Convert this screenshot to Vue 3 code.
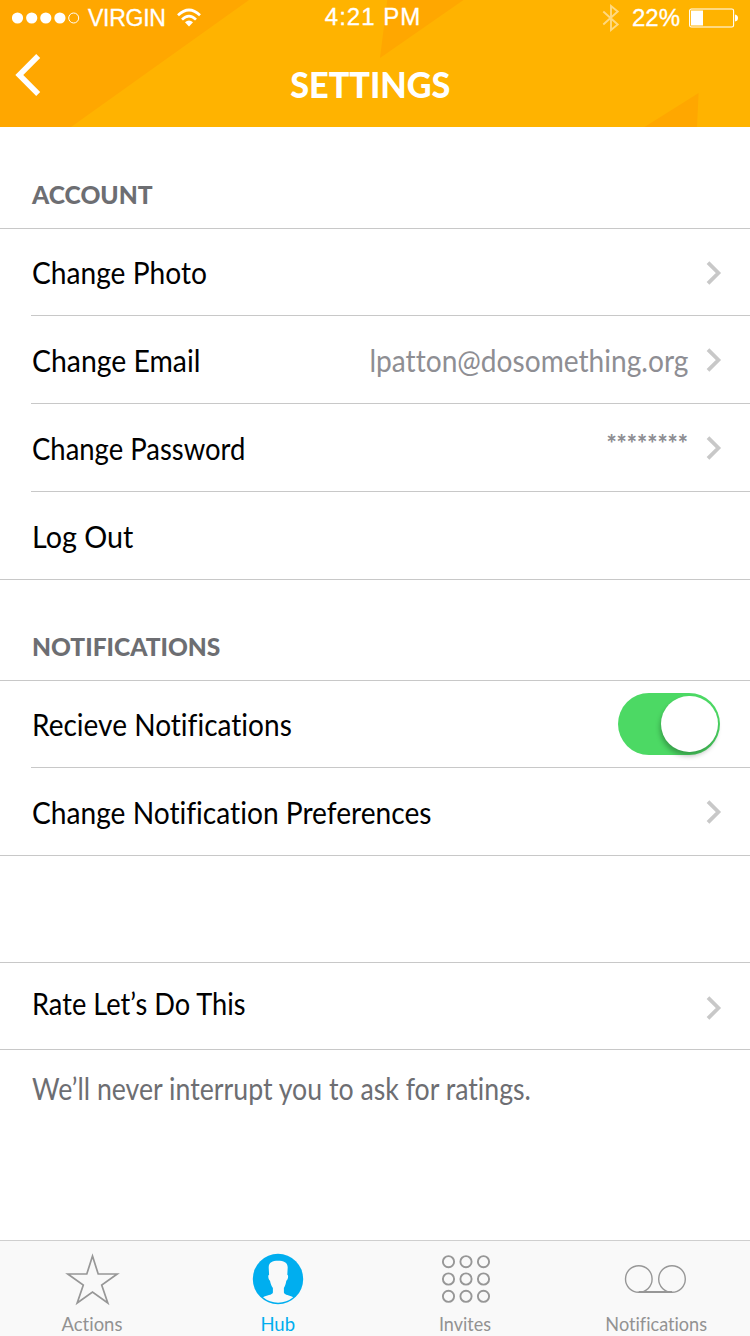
<script setup>
const groups = [
  {
    id: 'account',
    title: 'ACCOUNT',
    fit: 0.985,
    rows: [
      { label: 'Change Photo', fit: 0.938, chevron: true },
      { label: 'Change Email', fit: 0.946, chevron: true, value: 'lpatton@dosomething.org', valueFit: 0.937 },
      { label: 'Change Password', fit: 0.915, chevron: true, value: '********', valueFit: 1, masked: true },
      { label: 'Log Out', fit: 0.957 },
    ],
  },
  {
    id: 'notifications',
    title: 'NOTIFICATIONS',
    fit: 0.982,
    rows: [
      { label: 'Recieve Notifications', fit: 0.935, toggle: true },
      { label: 'Change Notification Preferences', fit: 0.938, chevron: true },
    ],
  },
  {
    id: 'rate',
    rows: [{ label: 'Rate Let’s Do This', fit: 0.907, chevron: true }],
  },
]

const tabs = [
  { id: 'actions', label: 'Actions', fit: 0.922 },
  { id: 'hub', label: 'Hub', fit: 0.925, active: true },
  { id: 'invites', label: 'Invites', fit: 0.9 },
  { id: 'notifications', label: 'Notifications', fit: 0.905 },
]

const dots = [448.5, 466, 483.5].flatMap((x) => [1261.7, 1279, 1296.3].map((y) => ({ x: x - 440, y: y - 1252 })))
const squeeze = (k) => ({ transform: `scaleX(${k})` })
</script>

<template>
  <div class="screen">
    <header class="header">
      <svg class="pattern" width="750" height="127" viewBox="0 0 750 127">
        <path d="M0 0H249L71 127H0ZM387.3 0H463.5L380 58ZM644.500 127L698.600 93L697 127Z" fill="#ffa700" />
      </svg>
      <div class="status">
        <div class="carrier">
          <svg width="70" height="14" viewBox="0 0 70 14">
            <g fill="#fff">
              <circle cx="5.500" cy="7" r="5.600" /><circle cx="19.700" cy="7" r="5.600" />
              <circle cx="33.800" cy="7" r="5.600" /><circle cx="47.900" cy="7" r="5.600" />
            </g>
            <circle cx="61.700" cy="7" r="5" fill="none" stroke="#fff" />
          </svg>
          <span class="network">VIRGIN</span>
          <svg class="wifi" width="24" height="20" viewBox="0 0 24 20">
            <path d="M1 7.300Q12 -3.300 23 7.300M5 11.600Q12 4.600 19 11.600" fill="none" stroke="#fff" stroke-width="2.700" />
            <path d="M8 14.300Q12 10.500 16 14.300L12 18.600Z" fill="#fff" />
          </svg>
        </div>
        <span class="time">4:21 PM</span>
        <div class="power">
          <svg class="bluetooth" width="18" height="28" viewBox="0 0 18 28">
            <path d="M1.300 7.500L15.700 20.500L9 26V2L15.700 7.500L1.300 20.500" fill="none" stroke="#fff" stroke-width="1.900" />
          </svg>
          <span class="percent">22%</span>
          <svg width="50" height="20" viewBox="0 0 50 20">
            <rect x="0.600" y="1" width="44" height="18" rx="1.800" fill="none" stroke="#fff" stroke-width="1.100" />
            <path d="M2 2.500H14V17.500H2ZM46 6.500Q49 7 49 10T46 13.500Z" fill="#fff" />
          </svg>
        </div>
      </div>
      <div class="nav">
        <svg class="back" width="28" height="44" viewBox="0 0 28 44">
          <path d="M24.200 3L5.300 22L24.200 41" fill="none" stroke="#fff" stroke-width="5.600" />
        </svg>
        <h1 class="title"><span class="fit center" :style="squeeze(0.95)">SETTINGS</span></h1>
      </div>
    </header>

    <main>
      <section v-for="g in groups" :key="g.id" class="group" :class="g.id">
        <h2 class="heading"><span v-if="g.title" class="fit" :style="squeeze(g.fit)">{{ g.title }}</span></h2>
        <div v-for="r in g.rows" :key="r.label" class="row">
          <span class="fit label" :style="squeeze(r.fit)">{{ r.label }}</span>
          <span v-if="r.value" class="fit value" :class="{ masked: r.masked }" :style="squeeze(r.valueFit)">{{ r.value }}</span>
          <svg v-if="r.chevron" class="chevron" width="16" height="26" viewBox="0 0 16 26">
            <path d="M2 2.600L12.400 13L2 23.400" fill="none" stroke="#c8c8c8" stroke-width="3.800" />
          </svg>
          <span v-if="r.toggle" class="toggle"><span class="knob"></span></span>
        </div>
      </section>
      <p class="note"><span class="fit" :style="squeeze(0.89)">We’ll never interrupt you to ask for ratings.</span></p>
    </main>

    <nav class="tabs">
      <div v-for="t in tabs" :key="t.id" class="tab" :class="[t.id, { active: t.active }]">
        <svg v-if="t.id === 'actions'" width="56" height="54" viewBox="0 0 56 54">
          <path d="M28.500 4L34.200 22H53.200L37.700 33.100L43.800 51L28.500 40L13.200 51L19.300 33.100L3.800 22H22.800Z" fill="none" stroke="#979797" stroke-width="1.700" />
        </svg>
        <svg v-else-if="t.id === 'hub'" width="52" height="54" viewBox="0 0 52 54">
          <circle cx="26" cy="27" r="25.200" fill="#00aeef" />
          <path d="M26 8.700C20.500 8.700 16.700 10.200 16.700 15.500L17.100 22.800C15.700 22.800 16.200 27.800 18 28.700C18.500 31.500 19.500 34 20.900 36V40.500C20.200 43.300 14.500 43 11 45.300A23.700 23.700 0 0 0 41.200 45.300C37.500 43 32.700 43.300 31.900 40.500V36C33.300 33.500 33.900 31.500 34.300 28.700C36.200 27.800 36.700 22.800 35.300 22.800L35.700 15.500C35.700 10.200 31.500 8.700 26 8.700Z" fill="#f9f9f9" />
        </svg>
        <svg v-else-if="t.id === 'invites'" width="52" height="54" viewBox="0 0 52 54">
          <circle v-for="(d, i) in dots" :key="i" :cx="d.x" :cy="d.y" r="5.600" fill="none" stroke="#979797" stroke-width="1.900" />
        </svg>
        <svg v-else width="64" height="54" viewBox="0 0 64 54">
          <g fill="none" stroke="#979797" stroke-width="1.400">
            <circle cx="15.800" cy="27" r="13.300" /><circle cx="49" cy="27" r="13.300" />
            <path d="M15.800 40H49" stroke-width="2" />
          </g>
        </svg>
        <span class="fit center caption" :style="squeeze(t.fit)">{{ t.label }}</span>
      </div>
    </nav>
  </div>
</template>

<style>
body {
  margin: 0;
  background: #fff;
}
</style>

<style scoped>
.screen {
  width: 750px;
  height: 1336px;
  display: flex;
  flex-direction: column;
  background: #fff;
  overflow: hidden;
  font-family: Lato, 'Noto Sans', sans-serif;
  font-variant-ligatures: none;
}
svg {
  display: block;
  flex: none;
}
.fit {
  display: inline-block;
  white-space: nowrap;
  transform-origin: left center;
}
.fit.center {
  transform-origin: center;
}
.header {
  position: relative;
  height: 127px;
  flex: none;
  background: #ffb300;
  color: #fff;
}
.pattern {
  position: absolute;
  inset: 0;
}
.status {
  position: relative;
  height: 35px;
  display: grid;
  grid-template-columns: 250px 1fr 250px;
  align-items: center;
  font: 24px/34px 'Liberation Sans', Arial, sans-serif;
  -webkit-text-stroke: 0.3px #fff;
}
.carrier {
  display: flex;
  align-items: center;
  padding-left: 12px;
}
.network {
  margin-left: 6px;
  font-size: 23px;
  letter-spacing: -0.25px;
}
.wifi {
  margin-left: 11px;
}
.time {
  align-self: start;
  text-align: center;
  letter-spacing: 1px;
  padding-right: 4px;
}
.power {
  display: flex;
  align-items: center;
  justify-content: flex-end;
  padding-right: 11px;
}
.bluetooth {
  opacity: 0.5;
  margin-right: 12px;
}
.percent {
  margin-right: 9px;
}
.nav {
  position: relative;
  height: 92px;
  display: flex;
  align-items: flex-start;
}
.back {
  margin: 18px 0 0 14px;
}
.title {
  flex: 1;
  margin: 24px 52px 0 0;
  text-align: center;
  font-size: 36px;
  line-height: 50px;
  font-weight: 900;
}
.heading {
  box-sizing: border-box;
  height: 102px;
  margin: 0;
  padding: 48px 0 0 32px;
  border-bottom: 1px solid #c8c8c8;
  font-size: 25px;
  line-height: 38px;
  font-weight: 900;
  color: #6d6e72;
}
.notifications .heading {
  height: 101px;
  padding-top: 47px;
}
.rate .heading {
  height: 107px;
}
.row {
  position: relative;
  box-sizing: border-box;
  height: 87px;
  display: flex;
  align-items: center;
  padding: 0 28px 2px 32px;
  font-size: 30px;
  line-height: 36px;
  color: #000;
}
/* hairline separators are inset until the last row of a group */
.row::after {
  content: '';
  position: absolute;
  left: 31px;
  right: 0;
  bottom: 0;
  height: 1px;
  background: #c8c8c8;
}
.row:last-child::after {
  left: 0;
}
.row + .row {
  height: 88px;
  padding-bottom: 0;
}
.label {
  margin-right: auto;
}
.rate .label {
  padding-bottom: 5px;
  margin-left: -0.500px;
}
.value {
  transform-origin: right center;
  color: #8e8e93;
}
.masked {
  font-size: 24px;
  font-weight: 900;
  padding-bottom: 9px;
}
.chevron {
  margin-left: 18px;
  margin-top: 2px;
}
.row + .row .chevron {
  margin-top: 0;
}
.rate .chevron {
  margin-top: 4px;
}
.toggle {
  box-sizing: border-box;
  width: 102px;
  height: 62px;
  margin-right: 2px;
  padding: 3px 2.500px 3px 0;
  border-radius: 31px;
  background: #4cd964;
  display: flex;
  justify-content: flex-end;
}
.knob {
  width: 56.500px;
  height: 56.500px;
  border-radius: 50%;
  background: #fff;
  box-shadow: -1px 4px 5px rgba(0, 0, 0, 0.27);
}
.note {
  margin: 0;
  padding: 18px 0 0 32px;
  font-size: 30px;
  line-height: 40px;
  color: #6d6e72;
}
.tabs {
  box-sizing: border-box;
  height: 96px;
  margin-top: auto;
  display: grid;
  grid-template-columns: 184px 188px 188px 190px;
  padding-top: 11px;
  border-top: 1px solid #cfcfcf;
  background: #f9f9f9;
}
.tab {
  display: flex;
  flex-direction: column;
  align-items: center;
  color: #929292;
}
.tab.active {
  color: #00aeef;
}
.caption {
  margin-top: 5px;
  font-size: 20px;
  line-height: 24px;
}
.tab.invites .caption {
  margin-right: 2px;
}
.tab.notifications .caption {
  margin-left: 2px;
}
</style>
